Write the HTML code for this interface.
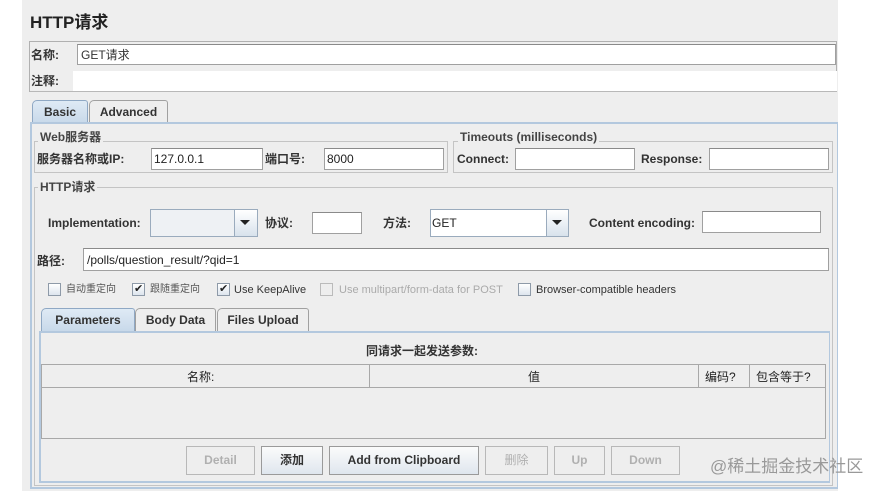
<!DOCTYPE html>
<html><head><meta charset="utf-8"><style>
*{margin:0;padding:0;box-sizing:border-box}
body{width:887px;height:493px;background:#fff;position:relative;overflow:hidden;font-family:"Liberation Sans","Noto Sans CJK SC",sans-serif;font-size:12px;color:#222}
.a{position:absolute}
.t{position:absolute;white-space:nowrap;line-height:14px}
.b{font-weight:bold;color:#333}
.f{position:absolute;background:#fff;border:1px solid #a0a0a0;border-top-color:#8a8a8a}
.fs{position:absolute;border:1px solid #c4c4c4}
.lg{position:absolute;background:#eeeeee;padding:0 2px;font-weight:bold;color:#444;line-height:14px;font-size:12px}
.cb{position:absolute;width:13px;height:13px;border:1px solid #8e9aa8;background:linear-gradient(#fff,#dde5ee)}
.ck::after{content:"✔";position:absolute;left:1px;top:-2px;font-size:11px;color:#222}
.btn{position:absolute;height:29px;border:1px solid #9a9a9a;background:linear-gradient(#fbfbfb,#dfe6ee);text-align:center;line-height:27px;font-weight:bold;color:#333;font-size:12px}
.dis{color:#b0b0b0;background:#eeeeee;border-color:#b8b8b8;font-weight:bold}
.tab{position:absolute;height:23px;border:1px solid #a0a0a0;border-bottom:none;background:#eeeeee;font-weight:bold;color:#333;text-align:center;line-height:22px;font-size:12px;border-radius:5px 3px 0 0}
.sel{background:linear-gradient(#dfeaf5,#c8d9ea);border-color:#8fa8c4}
</style></head><body>
<div class="a" style="left:22px;top:0;width:816px;height:491px;background:#eeeeee"></div>
<div class="t b" style="left:30px;top:13px;font-size:17px;line-height:20px;color:#222">HTTP请求</div>
<div class="fs" style="left:29px;top:41px;width:808px;height:51px;border-color:#b0b0b0"></div>
<div class="t b" style="left:31px;top:48px">名称:</div>
<div class="f" style="left:77px;top:44px;width:759px;height:21px"></div>
<div class="t" style="left:81px;top:48px;color:#333">GET请求</div>
<div class="t b" style="left:31px;top:74px">注释:</div>
<div class="a" style="left:73px;top:71px;width:764px;height:20px;background:#fff"></div>
<div class="a" style="left:30px;top:91px;width:807px;height:1px;background:#b8b8b8"></div>
<div class="tab sel" style="left:32px;top:100px;width:56px">Basic</div>
<div class="tab" style="left:89px;top:100px;width:79px">Advanced</div>
<div class="a" style="left:30px;top:122px;width:808px;height:367px;border:2px solid #b3c8de;border-right-width:1px"></div>
<div class="fs" style="left:34px;top:141px;width:414px;height:32px"></div>
<div class="lg" style="left:38px;top:130px">Web服务器</div>
<div class="t b" style="left:37px;top:152px">服务器名称或IP:</div>
<div class="f" style="left:151px;top:148px;width:112px;height:22px"></div>
<div class="t" style="left:154px;top:152px">127.0.0.1</div>
<div class="t b" style="left:265px;top:152px">端口号:</div>
<div class="f" style="left:324px;top:148px;width:120px;height:22px"></div>
<div class="t" style="left:327px;top:152px">8000</div>
<div class="fs" style="left:453px;top:141px;width:380px;height:32px"></div>
<div class="lg" style="left:458px;top:130px">Timeouts (milliseconds)</div>
<div class="t b" style="left:457px;top:152px">Connect:</div>
<div class="f" style="left:515px;top:148px;width:120px;height:22px"></div>
<div class="t b" style="left:641px;top:152px">Response:</div>
<div class="f" style="left:709px;top:148px;width:120px;height:22px"></div>
<div class="fs" style="left:34px;top:187px;width:799px;height:299px"></div>
<div class="lg" style="left:38px;top:180px">HTTP请求</div>
<div class="t b" style="left:48px;top:216px">Implementation:</div>
<div class="a" style="left:150px;top:209px;width:108px;height:28px;border:1px solid #9aabbd;background:#eef1f4"></div>
<div class="a" style="left:234px;top:210px;width:23px;height:26px;border-left:1px solid #9aabbd;background:linear-gradient(#fff,#d8e2ec)"></div>
<div class="a" style="left:240px;top:220px;width:0;height:0;border-left:5px solid transparent;border-right:5px solid transparent;border-top:5px solid #222"></div>
<div class="t b" style="left:265px;top:216px">协议:</div>
<div class="f" style="left:312px;top:212px;width:50px;height:22px"></div>
<div class="t b" style="left:383px;top:216px">方法:</div>
<div class="a" style="left:430px;top:209px;width:139px;height:28px;border:1px solid #9aabbd;background:#fff"></div>
<div class="t" style="left:432px;top:216px">GET</div>
<div class="a" style="left:546px;top:210px;width:22px;height:26px;border-left:1px solid #9aabbd;background:linear-gradient(#fff,#d8e2ec)"></div>
<div class="a" style="left:552px;top:220px;width:0;height:0;border-left:5px solid transparent;border-right:5px solid transparent;border-top:5px solid #222"></div>
<div class="t b" style="left:589px;top:216px">Content encoding:</div>
<div class="f" style="left:702px;top:211px;width:119px;height:22px"></div>
<div class="t b" style="left:37px;top:254px">路径:</div>
<div class="f" style="left:83px;top:248px;width:746px;height:23px"></div>
<div class="t" style="left:87px;top:253px">/polls/question_result/?qid=1</div>
<div class="cb" style="left:48px;top:283px"></div>
<div class="t" style="left:66px;top:283px;font-size:10px;color:#555">自动重定向</div>
<div class="cb ck" style="left:132px;top:283px"></div>
<div class="t" style="left:150px;top:283px;font-size:10px;color:#555">跟随重定向</div>
<div class="cb ck" style="left:217px;top:283px"></div>
<div class="t" style="left:234px;top:283px;font-size:11px;color:#333">Use KeepAlive</div>
<div class="cb" style="left:320px;top:283px;background:#eeeeee;border-color:#bbb"></div>
<div class="t" style="left:339px;top:283px;font-size:11px;color:#aaa">Use multipart/form-data for POST</div>
<div class="cb" style="left:518px;top:283px"></div>
<div class="t" style="left:536px;top:283px;font-size:11px;color:#333">Browser-compatible headers</div>
<div class="tab sel" style="left:41px;top:308px;width:94px">Parameters</div>
<div class="tab" style="left:135px;top:308px;width:81px">Body Data</div>
<div class="tab" style="left:217px;top:308px;width:92px">Files Upload</div>
<div class="a" style="left:39px;top:331px;width:791px;height:152px;border:2px solid #b3c8de;border-right-width:1px"></div>
<div class="t b" style="left:366px;top:344px">同请求一起发送参数:</div>
<div class="a" style="left:41px;top:364px;width:785px;height:75px;border:1px solid #a8a8a8;border-top:none"></div>
<div class="a" style="left:41px;top:364px;width:785px;height:24px;border:1px solid #a8a8a8;background:#eeeeee"></div>
<div class="a" style="left:369px;top:364px;width:1px;height:24px;background:#a8a8a8"></div>
<div class="a" style="left:698px;top:364px;width:1px;height:24px;background:#a8a8a8"></div>
<div class="a" style="left:749px;top:364px;width:1px;height:24px;background:#a8a8a8"></div>
<div class="t" style="left:187px;top:370px">名称:</div>
<div class="t" style="left:528px;top:370px">值</div>
<div class="t" style="left:705px;top:370px">编码?</div>
<div class="t" style="left:756px;top:370px">包含等于?</div>
<div class="btn dis" style="left:186px;top:446px;width:69px">Detail</div>
<div class="btn" style="left:261px;top:446px;width:62px">添加</div>
<div class="btn" style="left:329px;top:446px;width:150px">Add from Clipboard</div>
<div class="btn dis" style="left:485px;top:446px;width:63px;font-weight:normal">删除</div>
<div class="btn dis" style="left:554px;top:446px;width:51px">Up</div>
<div class="btn dis" style="left:611px;top:446px;width:69px">Down</div>
<div class="t" style="left:710px;top:457px;font-size:17px;line-height:19px;color:#999">@稀土掘金技术社区</div>
</body></html>
